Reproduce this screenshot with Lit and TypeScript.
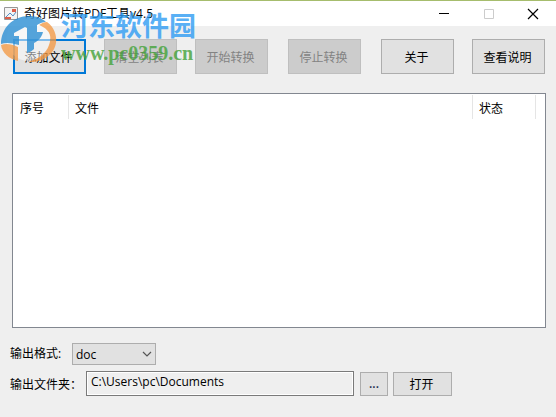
import { LitElement, html, css } from "lit";
import { customElement } from "lit/decorators.js";

@customElement("app-root")
export class AppRoot extends LitElement {
  static styles = css`
    :host {
      display: flex;
      flex-direction: column;
      position: relative;
      min-height: 100vh;
      box-sizing: border-box;
      background: #efefef;
      color: #000;
      font: 12px/16px "Open Sans", "Noto Sans CJK SC", sans-serif;
    }
    * { box-sizing: border-box; }
    button, input, select { font: inherit; color: inherit; margin: 0; border-radius: 0; }
    .titlebar {
      display: flex;
      align-items: center;
      height: 26px;
      border-top: 1px solid #a6bd6d;
      background: #fff;
      padding-left: 4px;
    }
    .title { flex: 1; margin: 0 0 0 5px; font-size: 12px; font-weight: 400; white-space: nowrap; }
    .app-icon { width: 15px; height: 15px; }
    .win { width: 45px; height: 24px; padding: 0; border: 0; background: none; display: grid; place-items: center; }
    .win:last-child { width: 44px; margin-right: 1px; }
    .win svg { width: 12px; height: 12px; display: block; }
    .toolbar { display: flex; justify-content: space-between; padding: 13px 11px 0 13px; }
    .group { display: flex; gap: 18px; }
    .btn { height: 24px; padding: 2px 2px 0 0; border: 1px solid #adadad; background: #e1e1e1; white-space: nowrap; }
    .tool { width: 73px; height: 35px; }
    .tool:disabled { background: #ccc; border-color: #bfbfbf; color: #838383; }
    .primary { border: 2px solid #0078d7; }
    .list { flex: 1; margin: 19px 10px 0 12px; border: 1px solid #828790; background: #fff; padding-top: 1px; }
    table { width: 100%; border-collapse: separate; border-spacing: 0; table-layout: fixed; }
    th { height: 24px; padding: 3px 0 0 6px; border-right: 1px solid #e5e5e5; text-align: left; font-weight: 400; }
    th:first-child { padding-left: 7px; }
    .c-no { width: 56px; }
    .c-state { width: 63px; }
    th.c-end { width: 9px; border: 0; padding: 0; }
    .form { display: grid; gap: 6px; padding: 15px 10px 21px; }
    .row { display: flex; align-items: center; }
    .label { white-space: nowrap; }
    .format-label { width: 62px; }
    .folder-label { width: 76px; padding-top: 2px; }
    .pick { position: relative; width: 84px; height: 22px; }
    select { appearance: none; width: 100%; height: 100%; padding: 1px 20px 0 3px; border: 1px solid #adadad; background: #e1e1e1; }
    .chev { position: absolute; right: 4px; top: 8px; width: 10px; height: 7px; pointer-events: none; }
    .path { flex: 0 1 268px; min-width: 0; height: 25px; padding: 0 4px 4px; border: 1px solid #7a7a7a; background: #efefef; box-shadow: inset 0 0 0 1px #fff; }
    .browse { width: 28px; margin-left: 6px; padding: 0; font-weight: 600; color: #1c2c4c; }
    .open { width: 59px; margin-left: 5px; }
    .mark { position: absolute; left: 0; top: 9px; display: flex; pointer-events: none; }
    .logo { width: 61px; height: 66px; }
    .name { font: 700 27px/32px "Noto Sans CJK SC", sans-serif; color: #2b9af3; opacity: 0.78; white-space: nowrap; }
    .site { font: 700 20px/24px "Liberation Serif", serif; color: #45a33b; opacity: 0.8; }
  `;

  render() {
    return html`
      <header class="titlebar">
        <svg class="app-icon" viewBox="0 0 15 15">
          <path d="M.5 1.5h13v12H.5z" fill="#f4f4f4" stroke="#969696" />
          <path d="M2 11l4-4 3 3 3-4" fill="none" stroke="#568fc6" />
          <path d="M8 3h4v3H8zM1 11h6v2H1z" fill="#dc5f4b" />
        </svg>
        <h1 class="title">奇好图片转PDF工具v4.5</h1>
        <button class="win" aria-label="最小化"><svg viewBox="0 0 12 12"><path d="M1 5.5h10" stroke="#000" /></svg></button>
        <button class="win" aria-label="最大化" disabled><svg viewBox="0 0 12 12"><path d="M1.5 1.5h9v9h-9z" fill="none" stroke="#ccc" /></svg></button>
        <button class="win" aria-label="关闭"><svg viewBox="0 0 12 12"><path d="M1 1l10 10M11 1L1 11" stroke="#000" stroke-width="1.2" /></svg></button>
      </header>
      <nav class="toolbar">
        <div class="group">
          <button class="btn tool primary">添加文件</button>
          <button class="btn tool" disabled>清空列表</button>
          <button class="btn tool" disabled>开始转换</button>
        </div>
        <button class="btn tool" disabled>停止转换</button>
        <div class="group">
          <button class="btn tool">关于</button>
          <button class="btn tool">查看说明</button>
        </div>
      </nav>
      <main class="list">
        <table>
          <thead>
            <tr><th class="c-no">序号</th><th>文件</th><th class="c-state">状态</th><th class="c-end"></th></tr>
          </thead>
        </table>
      </main>
      <section class="form">
        <div class="row">
          <label class="label format-label" for="format">输出格式:</label>
          <div class="pick">
            <select id="format"><option>doc</option></select>
            <svg class="chev" viewBox="0 0 10 7"><path d="M1 1l4 4 4-4" fill="none" stroke="#555" stroke-width="1.2" /></svg>
          </div>
        </div>
        <div class="row">
          <label class="label folder-label" for="folder">输出文件夹：</label>
          <input class="path" id="folder" readonly value="C:\\Users\\pc\\Documents" />
          <button class="btn browse" aria-label="浏览">...</button>
          <button class="btn open">打开</button>
        </div>
      </section>
      <div class="mark">
        <svg class="logo" viewBox="0 9 61 66">
          <circle cx="28.500" cy="39" r="22" fill="#fff" opacity="0.5" />
          <g opacity="0.78">
            <path d="M1 44C1 28 13 16 29 16c7 0 13 2 17 6-3 0-6 1-9 3v7h6c-1 5-5 9-9 11v6c-2 2-4 3-7 4V28l-2-1-11 6v3h5v9C12 43 6 42 1 44z" fill="#278cd3" />
            <path d="M1 45c5-2 11-1 17 2v14C9 59 2 53 1 45z" fill="#f49a45" />
            <path d="M47 22c7 5 10 13 9 21-2 12-14 20-28 19 10-3 18-8 21-17 3-8 1-14-6-18-2-1-3-2-4-2 3-2 5-3 8-3z" fill="#f49a45" />
          </g>
        </svg>
        <div>
          <div class="name">河东软件园</div>
          <div class="site">www.pc0359.cn</div>
        </div>
      </div>
    `;
  }
}
